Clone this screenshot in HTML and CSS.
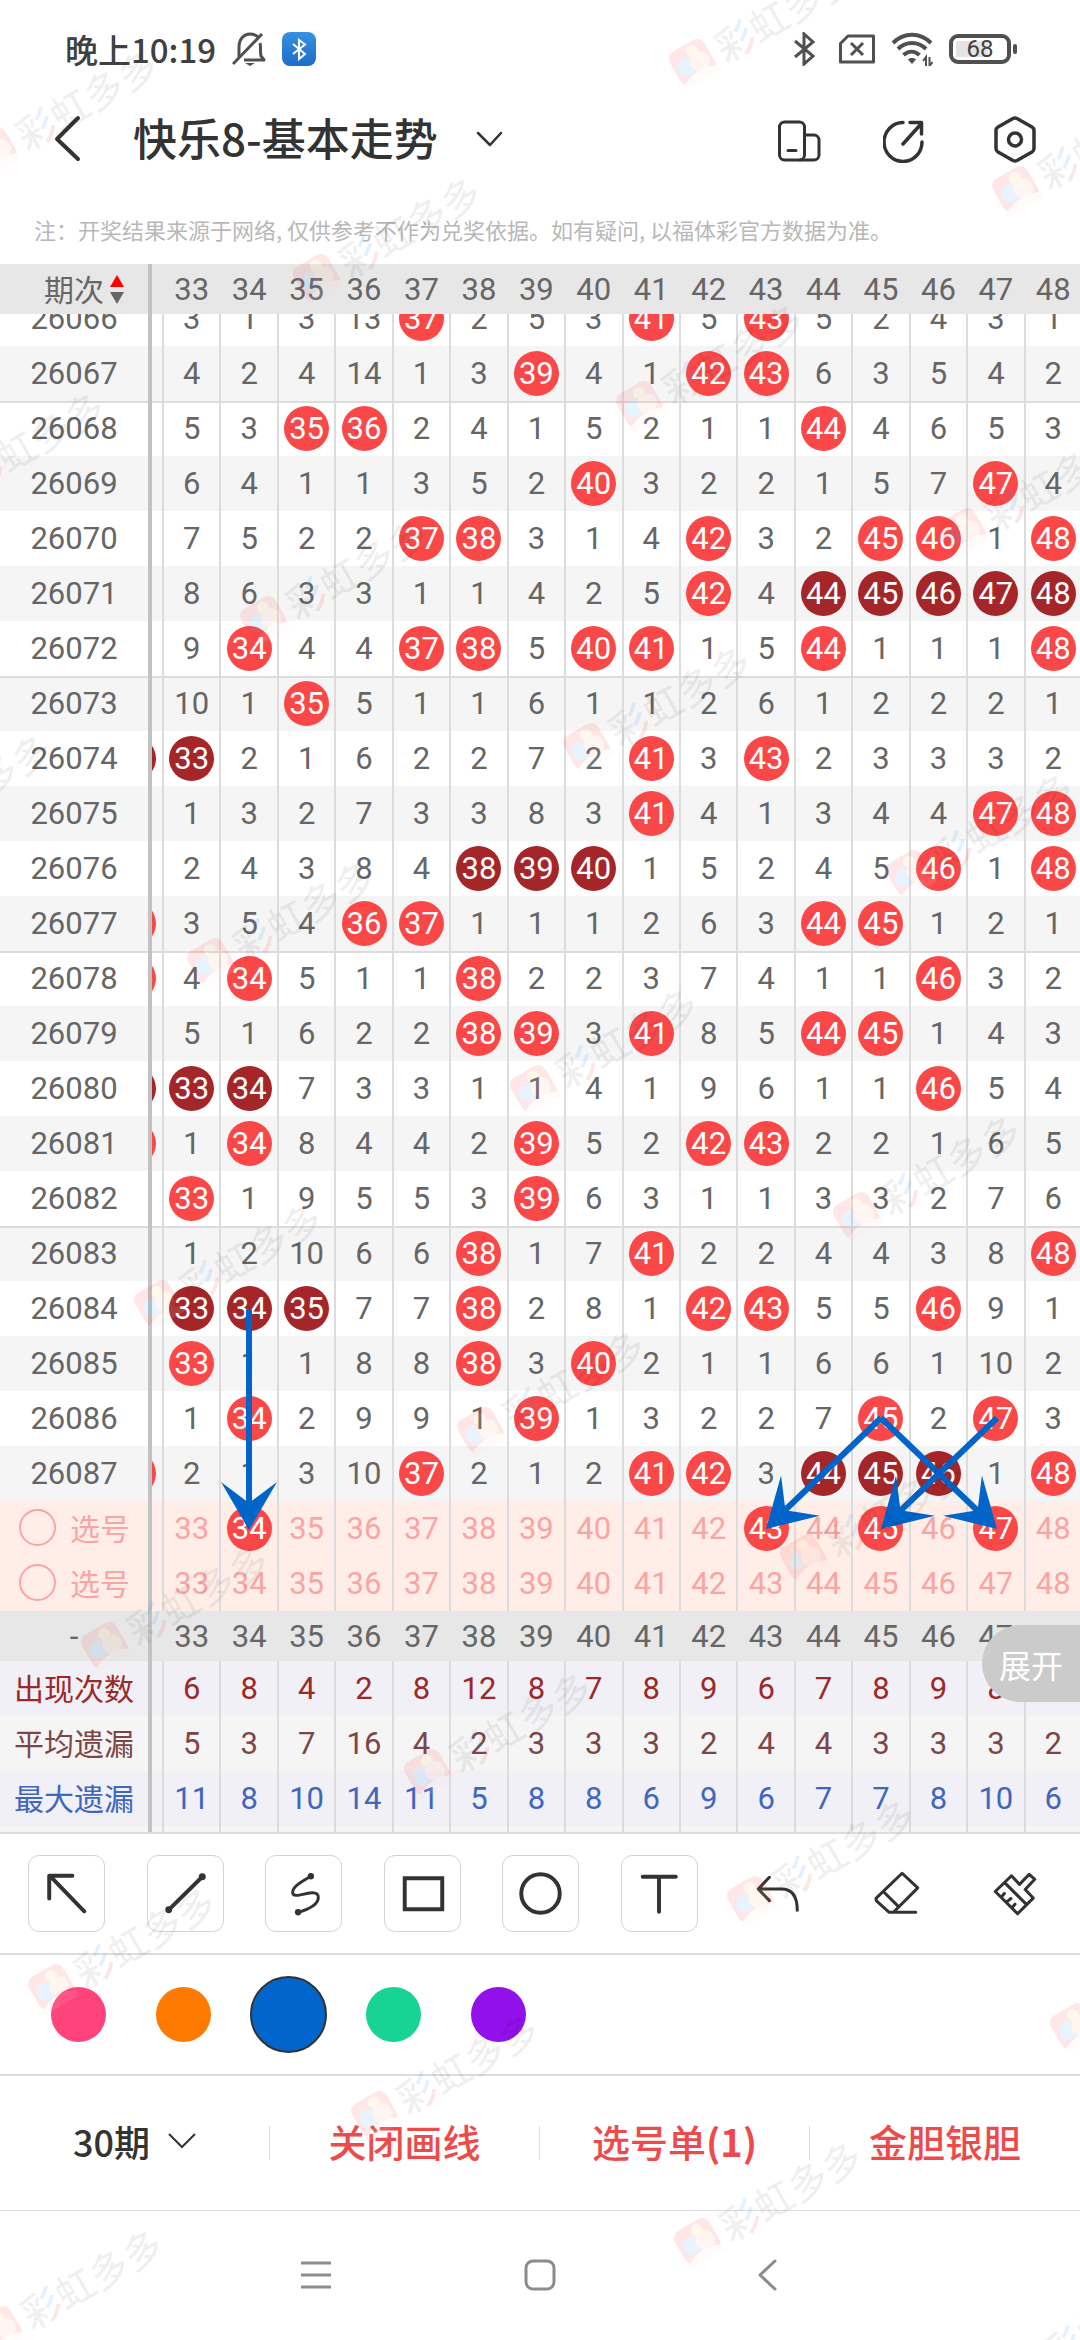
FILE: index.html
```html
<!DOCTYPE html>
<html lang="zh-CN">
<head>
<meta charset="utf-8">
<meta name="viewport" content="width=device-width">
<title>快乐8-基本走势</title>
<link rel="stylesheet" href="styles.css">
</head>
<body>
<div class="screen">
  <div class="status">
    <span class="clock">晚上10:19</span>
    <svg class="ico-bell" width="34" height="34" viewBox="0 0 34 34" fill="none" stroke="#505050" stroke-width="3"><path d="M7 25V15C7 7 12 2 18 2c3 0 6 1 8 3"/><path d="M28 11c1 3 0 9 1 13l3 4H12" stroke-linejoin="round"/><path d="M1 32L30 2"/><path d="M13 31h10l-5 3z" fill="#505050" stroke="none"/></svg>
    <span class="bt-app"><svg width="34" height="34" viewBox="0 0 34 34" fill="none" stroke="#fff" stroke-width="2"><path d="M11 12l12 10-6 5V8l6 4.500L11 22"/></svg></span>
    <div class="status-right">
      <svg width="26" height="34" viewBox="0 0 26 34" fill="none" stroke="#505050" stroke-width="3"><path d="M2 9l18 15-9 8V2l9 8L2 25"/></svg>
      <svg width="40" height="34" viewBox="0 0 40 34" fill="none" stroke="#505050" stroke-width="3" stroke-linejoin="round"><path d="M5.500 11.500L13 4H38.500V30H5.500zM16 11l12 12M28 11L16 23"/></svg>
      <svg width="42" height="34" viewBox="0 0 42 34" fill="none" stroke="#505050" stroke-width="4"><path d="M2 11C13 0 29 0 40 11M7 17c8-8 20-8 28 0M12.500 23c5-4.500 11-4.500 16 0"/><path d="M17 27.500c2-2 6-2 8 0L21 32z" fill="#505050" stroke="none"/><path d="M35 34V25l-3 4M38.500 25v9l3-4" stroke-width="2"/></svg>
      <span class="battery"><span class="battery-body">68</span><span class="battery-nub"></span></span>
    </div>
  </div>

  <header class="topbar">
    <button class="icon-btn" aria-label="返回"><svg width="48" height="48" viewBox="0 0 48 48" fill="none" stroke="#333" stroke-width="4" stroke-linecap="round" stroke-linejoin="round"><path d="M35 3L14 24l21 20"/></svg></button>
    <h1 class="title">快乐8-基本走势</h1>
    <button class="icon-btn" aria-label="切换走势"><svg width="32" height="32" viewBox="0 0 32 32" fill="none" stroke="#333" stroke-width="2.500" stroke-linecap="round" stroke-linejoin="round"><path d="M4 10l12 12 11-12"/></svg></button>
    <div class="actions">
      <button class="icon-btn" aria-label="横屏"><svg width="48" height="48" viewBox="0 0 48 48" fill="none" stroke="#333" stroke-width="3" stroke-linecap="round"><rect x="4.500" y="7" width="25" height="38" rx="5"/><path d="M30 20h9a5 5 0 0 1 5 5v15a5 5 0 0 1-5 5H25M13 35.500h8"/></svg></button>
      <button class="icon-btn" aria-label="分享"><svg width="48" height="48" viewBox="0 0 48 48" fill="none" stroke="#333" stroke-width="3.500" stroke-linecap="round" stroke-linejoin="round"><path d="M20 7.500A19 19.500 0 1 0 39 27M20 29L38 9M27 7.500h11.500V19"/></svg></button>
      <button class="icon-btn" aria-label="设置"><svg width="48" height="48" viewBox="0 0 48 48" fill="none" stroke="#333" stroke-width="3.500" stroke-linejoin="round"><path d="M22 3.500q2-1 4 0l15 8.500q2 1.200 2 3.500v18q0 2.300-2 3.500l-15 8.500q-2 1-4 0L7 37q-2-1.200-2-3.500v-18Q5 13.200 7 12z"/><circle cx="24" cy="24.500" r="6.500"/></svg></button>
    </div>
  </header>
  <p class="notice">注：开奖结果来源于网络, 仅供参考不作为兑奖依据。如有疑问, 以福体彩官方数据为准。</p>

  <main class="chart">
    <table class="trend" id="trend">
      <colgroup><col class="col-period"><col class="col-edge"><col span="16"></colgroup>
    </table>
    <svg class="drawing" viewBox="0 0 1080 1570" preserveAspectRatio="xMinYMin meet" fill="#0064c8" stroke="#0064c8" aria-hidden="true">
      <defs><path id="head" d="M0 0L-48-28-27 0-48 28z" stroke="none"/></defs>
      <g stroke-width="6">
        <path d="M249 1046V1245M881 1154L780 1251M881 1154L982 1251M997 1154L896 1251"/>
      </g>
      <use href="#head" transform="translate(249 1266) rotate(90)"/>
      <use href="#head" transform="translate(766 1265) rotate(136)"/>
      <use href="#head" transform="translate(997 1265) rotate(44)"/>
      <use href="#head" transform="translate(881 1265) rotate(136)"/>
    </svg>
    <button class="expand">展开</button>
  </main>

  <div class="tools" role="toolbar" aria-label="画线工具">
    <button class="tool boxed" aria-label="箭头"><svg viewBox="0 0 76 76"><path d="M56 56L21 20M44 20H20.500V43"/></svg></button>
    <button class="tool boxed" aria-label="直线"><svg viewBox="0 0 76 76"><path d="M21 54.500L55 21"/><circle class="dot" cx="21" cy="54.500" r="3.500"/><circle class="dot" cx="55" cy="21" r="3.500"/></svg></button>
    <button class="tool boxed" aria-label="曲线"><svg viewBox="0 0 76 76"><path class="thin" d="M45.500 20.500C36 26 27 31 27 37C27 46 53 30 53 42C53 49 43 54 32.500 57"/><circle class="dot" cx="45.500" cy="20.500" r="3.200"/><circle class="dot" cx="32.500" cy="57" r="3.200"/></svg></button>
    <button class="tool boxed" aria-label="矩形"><svg viewBox="0 0 76 76"><path class="sharp" d="M20 22.500H58V54H20z"/></svg></button>
    <button class="tool boxed" aria-label="圆形"><svg viewBox="0 0 76 76"><circle cx="38" cy="38" r="19.500"/></svg></button>
    <button class="tool boxed" aria-label="文字"><svg viewBox="0 0 76 76"><path d="M21 21H54.500M37.500 21V56.500"/></svg></button>
    <button class="tool" aria-label="撤销"><svg viewBox="0 0 76 76"><path class="thin" d="M30 22L19 33.500L30 45M19 33.500H42C53 33.500 57.500 42 57.500 54.500"/></svg></button>
    <button class="tool" aria-label="橡皮擦"><svg viewBox="0 0 76 76"><path class="thin" d="M43.500 18L59 32.500L35 56.500H30.500L18.500 45.500Q17 43.500 18.500 42zM25.500 36.500L40 51M34 56.500H57"/></svg></button>
    <button class="tool" aria-label="清空"><svg viewBox="0 0 76 76"><path class="thin" d="M19 36L35 20.500L43 29L52.500 19L58 24L48.500 34L56.500 42.500L41 58zM28.500 27.500L49.500 48.500M25 41.500L28 38M30 46.500L34.500 43M35.500 52L38.500 48.500"/></svg></button>
  </div>

  <div class="palette" role="group" aria-label="画线颜色">
    <input type="radio" name="color" class="swatch pink" aria-label="粉色">
    <input type="radio" name="color" class="swatch orange" aria-label="橙色">
    <input type="radio" name="color" class="swatch blue" aria-label="蓝色" checked>
    <input type="radio" name="color" class="swatch green" aria-label="绿色">
    <input type="radio" name="color" class="swatch purple" aria-label="紫色">
  </div>

  <div class="bottombar">
    <button class="period">30期<svg width="28" height="28" viewBox="0 0 28 28" fill="none" stroke="#333" stroke-width="2"><path d="M1 7l13 13L27 7"/></svg></button>
    <button>关闭画线</button>
    <button>选号单<b>(1)</b></button>
    <button>金胆银胆</button>
  </div>

  <nav class="sysnav">
    <button class="icon-btn" aria-label="最近任务"><svg width="32" height="32" viewBox="0 0 32 32" stroke="#8c8c8c" stroke-width="3"><path d="M1 4h30M1 16h30M1 28h30"/></svg></button>
    <button class="icon-btn" aria-label="主屏幕"><svg width="32" height="32" viewBox="0 0 32 32" fill="none" stroke="#8c8c8c" stroke-width="3"><rect x="2" y="2" width="28" height="28" rx="7"/></svg></button>
    <button class="icon-btn" aria-label="后退"><svg width="32" height="32" viewBox="0 0 32 32" fill="none" stroke="#8c8c8c" stroke-width="3" stroke-linecap="round" stroke-linejoin="round"><path d="M27 2L12 16l15 14"/></svg></button>
  </nav>

  <div class="watermarks" id="watermarks" aria-hidden="true"></div>
</div>
<script src="script.js"></script>
</body>
</html>
```
FILE: styles.css
```css
* { box-sizing: border-box; }
body {
  margin: 0;
  background: #fff;
  color: #333;
  font-family: Roboto, "Noto Sans CJK SC", sans-serif;
}
button {
  margin: 0;
  padding: 0;
  border: 0;
  background: none;
  color: inherit;
  font: inherit;
}
svg { display: block; }
.screen { position: relative; overflow: hidden; min-height: 100vh; }

/* system status bar */
.status {
  display: flex;
  align-items: center;
  height: 98px;
  padding: 0 63px 0 65px;
}
.clock {
  font: 500 33px/48px "Noto Sans CJK SC", sans-serif;
  color: #404040;
}
.ico-bell { margin: 0 16px; }
.bt-app {
  border-radius: 8px;
  background: linear-gradient(#3592e0, #1f6cc9);
}
.status-right { display: flex; align-items: center; gap: 16px; margin-left: auto; }
.battery { display: flex; align-items: center; gap: 2px; }
.battery-body {
  width: 62px;
  height: 30px;
  border: 4px solid #505050;
  border-radius: 9px;
  background: linear-gradient(#e4e4e4, #e4e4e4) 3px 3px / 32px 16px no-repeat;
  color: #404040;
  font-size: 24px;
  line-height: 23px;
  text-align: center;
}
.battery-nub { width: 4px; height: 10px; border-radius: 2px; background: #505050; }

/* page header */
.topbar {
  display: flex;
  align-items: center;
  height: 82px;
  padding: 0 41px 0 43px;
}
.icon-btn { display: block; }
.title {
  margin: 0 36px 0 42px;
  padding-bottom: 4px;
  font: 500 44px/64px "Noto Sans CJK SC", sans-serif;
}
.actions { display: flex; gap: 60px; margin-left: auto; }
.notice {
  margin: 0;
  padding: 17px 34px 3px;
  font: 22px/64px "Noto Sans CJK SC", sans-serif;
  color: #b8b8b8;
  white-space: nowrap;
}

/* trend table */
.chart { position: relative; overflow: hidden; border-bottom: 2px solid #dcdcdc; }
.trend {
  width: calc(100% + 3px);
  table-layout: fixed;
  border-collapse: separate;
  border-spacing: 0;
  font-size: 31px;
  color: #666;
}
.col-period { width: 152px; }
.col-edge { width: 12px; }
.trend th, .trend td {
  padding: 0;
  border-right: 2px solid #dcdcdc;
  font-weight: 400;
}
.trend tr > :first-child { border-right: 4px solid #c2c2c2; }
.cell {
  display: flex;
  flex: none;
  align-items: center;
  justify-content: center;
  width: 100%;
  height: 55px;
  line-height: 45px;
}
.clip { display: flex; align-items: flex-end; height: 32px; overflow: hidden; }
.scale { background: #e7e7e7; }
.scale th { border-right-color: #e7e7e7; }
.scale .cell { height: 50px; }
.shade { background: #f5f5f5; }
.group th, .group td { box-shadow: inset 0 2px #dcdcdc; }
.trend .label {
  padding-bottom: 2px;
  font-family: "Noto Sans CJK SC", sans-serif;
  font-size: 30px;
}
.sort { display: grid; gap: 5px; margin: 2px -20px 0 6px; }
.sort::before, .sort::after {
  content: "";
  border: 7px solid transparent;
  border-width: 0 7px 12px;
  border-bottom-color: #f00;
}
.sort::after { border-width: 12px 7px 0; border-top-color: #666; }
.ball {
  flex: none;
  width: 45px;
  height: 45px;
  border-radius: 50%;
  background: #fa4848;
  color: #fff;
  text-align: center;
}
.ball.run { background: #a52628; }
.edge .cell { justify-content: flex-end; padding-right: 6px; overflow: hidden; }
.pick { background: #ffeee8; color: #fba4a4; }
.pick .cell:has(input) { justify-content: flex-start; padding-left: 19px; gap: 14px; }
.pick input {
  appearance: none;
  width: 37px;
  height: 37px;
  margin: 0;
  border: 2px solid #fba4a4;
  border-radius: 50%;
}
.count { background: #f1f0f6; color: #9c282a; }
.mean { background: #f6f5f6; color: #7d4646; }
.most { background: #f1f0f6; color: #4066bd; }
.rest { background: #f6f5f6; }
.rest .cell { height: 6px; }
.drawing { position: absolute; inset: 0 0 auto; width: 100%; pointer-events: none; }
.expand {
  position: absolute;
  right: 0;
  bottom: 130px;
  width: 98px;
  height: 77px;
  border-radius: 39px 0 0 39px;
  background: #cbcbcb;
  color: #fff;
  font-size: 32px;
}

/* drawing tools */
.tools {
  display: flex;
  justify-content: space-between;
  padding: 21px 27px 21px 28px;
  border-bottom: 2px solid #dcdcdc;
}
.tool { width: 77px; height: 77px; }
.boxed { border: 1px solid #d4d4d4; border-radius: 11px; }
.tool svg {
  width: 100%;
  fill: none;
  stroke: #333;
  stroke-width: 4;
  stroke-linecap: round;
  stroke-linejoin: round;
}
.tool .thin { stroke-width: 3; }
.tool .sharp { stroke-linejoin: miter; }
.tool .dot { fill: #333; stroke: none; }
.palette {
  display: flex;
  align-items: center;
  gap: 50px;
  height: 121px;
  padding-left: 51px;
  border-bottom: 2px solid #dcdcdc;
}
.swatch {
  appearance: none;
  width: 55px;
  height: 55px;
  margin: 0;
  border-radius: 50%;
}
.swatch:checked { width: 77px; height: 77px; margin: 0 -11px; border: 2px solid #333; }
.pink { background: #ff447c; }
.orange { background: #ff7a00; }
.blue { background: #0066cc; }
.green { background: #18d494; }
.purple { background: #9210ea; }

.bottombar {
  display: grid;
  grid-template-columns: repeat(4, 1fr);
  align-items: center;
  height: 135px;
  border-bottom: 1px solid #dcdcdc;
}
.bottombar button {
  height: 34px;
  padding-bottom: 4px;
  border-right: 1px solid #dcdcdc;
  color: #ed4b4b;
  font: 500 38px/30px "Noto Sans CJK SC", sans-serif;
}
.bottombar button:last-child { border-right: 0; }
.bottombar b { font-weight: 700; }
.bottombar .period {
  display: flex;
  align-items: center;
  justify-content: center;
  gap: 18px;
  color: #333;
  font-size: 36px;
}
.sysnav {
  display: flex;
  align-items: center;
  justify-content: center;
  gap: 192px;
  height: 128px;
}

/* brand watermark laid over the whole page */
.watermarks { position: absolute; inset: 0; overflow: hidden; pointer-events: none; }
.mark {
  position: absolute;
  display: flex;
  align-items: center;
  gap: 8px;
  height: 42px;
  margin: -21px 0 0 -20px;
  transform: rotate(-30deg);
  transform-origin: 20px 21px;
  color: rgba(0, 0, 0, 0.06);
  font: 500 39px/42px "Noto Sans CJK SC", sans-serif;
  white-space: nowrap;
}
.mark svg { opacity: 0.11; }
.mark i {
  font-style: normal;
  color: transparent;
  background:
    linear-gradient(rgba(30, 140, 255, 0.12) 62%, rgba(255, 50, 50, 0.12) 62%) 24px 0 / 15px 100% no-repeat,
    linear-gradient(rgba(0, 0, 0, 0.06), rgba(0, 0, 0, 0.06)) 0 0 / 24px 100% no-repeat;
  -webkit-background-clip: text;
  background-clip: text;
}
```
FILE: script.js
```js
// Draws: a number is the current miss count, "*" a hit, "#" a hit inside a run.
// The first mark of each row belongs to column 32, mostly scrolled out of view.
const draws = [
  ["26066", "- 3 1 3 13 * 2 5 3 * 5 * 5 2 4 3 1"],
  ["26067", "- 4 2 4 14 1 3 * 4 1 * * 6 3 5 4 2"],
  ["26068", "- 5 3 * * 2 4 1 5 2 1 1 * 4 6 5 3"],
  ["26069", "- 6 4 1 1 3 5 2 * 3 2 2 1 5 7 * 4"],
  ["26070", "- 7 5 2 2 * * 3 1 4 * 3 2 * * 1 *"],
  ["26071", "- 8 6 3 3 1 1 4 2 5 * 4 # # # # #"],
  ["26072", "- 9 * 4 4 * * 5 * * 1 5 * 1 1 1 *"],
  ["26073", "- 10 1 * 5 1 1 6 1 1 2 6 1 2 2 2 1"],
  ["26074", "# # 2 1 6 2 2 7 2 * 3 * 2 3 3 3 2"],
  ["26075", "- 1 3 2 7 3 3 8 3 * 4 1 3 4 4 * *"],
  ["26076", "- 2 4 3 8 4 # # # 1 5 2 4 5 * 1 *"],
  ["26077", "* 3 5 4 * * 1 1 1 2 6 3 * * 1 2 1"],
  ["26078", "* 4 * 5 1 1 * 2 2 3 7 4 1 1 * 3 2"],
  ["26079", "- 5 1 6 2 2 * * 3 * 8 5 * * 1 4 3"],
  ["26080", "# # # 7 3 3 1 1 4 1 9 6 1 1 * 5 4"],
  ["26081", "* 1 * 8 4 4 2 * 5 2 * * 2 2 1 6 5"],
  ["26082", "- * 1 9 5 5 3 * 6 3 1 1 3 3 2 7 6"],
  ["26083", "- 1 2 10 6 6 * 1 7 * 2 2 4 4 3 8 *"],
  ["26084", "- # # # 7 7 * 2 8 1 * * 5 5 * 9 1"],
  ["26085", "- * 1 1 8 8 * 3 * 2 1 1 6 6 1 10 2"],
  ["26086", "- 1 * 2 9 9 1 * 1 3 2 2 7 * 2 * 3"],
  ["26087", "* 2 1 3 10 * 2 1 2 * * 3 # # # 1 *"],
];
const stats = [
  ["count", "出现次数", "6 8 4 2 8 12 8 7 8 9 6 7 8 9 8 8"],
  ["mean", "平均遗漏", "5 3 7 16 4 2 3 3 3 2 4 4 3 3 3 2"],
  ["most", "最大遗漏", "11 8 10 14 11 5 8 8 6 9 6 7 7 8 10 6"],
];
const numbers = Array.from({ length: 16 }, (_, i) => 33 + i);

const cell = (html, extra = "") => `<div class="cell ${extra}">${html}</div>`;
const ball = (n, run) => `<span class="ball${run ? " run" : ""}">${n}</span>`;
const mark = (m, n) => (m === "*" ? ball(n) : m === "#" ? ball(n, true) : m === "-" ? "" : m);

function row(cls, head, edge, cells, tag = "td") {
  return `<tr class="${cls}"><th scope="row">${head}</th><${tag} class="edge">${edge}</${tag}>` +
    cells.map(c => `<${tag}>${c}</${tag}>`).join("") + "</tr>";
}

const body = draws.map(([id, marks], r) => {
  const wrap = r === 0 ? h => `<div class="clip">${cell(h)}</div>` : h => cell(h);
  const [edge, ...rest] = marks.split(" ");
  const cls = (r % 2 ? "shade" : "") + (r % 5 === 2 ? " group" : "");
  return row(cls, wrap(id), wrap(mark(edge, "")), rest.map((m, i) => wrap(mark(m, numbers[i]))));
}).join("");

const picks = [[34, 43, 45, 47], []].map((chosen, i) =>
  row("pick",
    cell(`<input type="checkbox" id="pick${i}"><label for="pick${i}">选号</label>`, "label"),
    cell(""),
    numbers.map(n => cell(chosen.includes(n) ? ball(n) : n)))
).join("");

const scale = head => row("scale", head, cell(""), numbers.map(n => cell(n)), "th");

document.getElementById("trend").insertAdjacentHTML("beforeend",
  "<thead>" + scale(cell('期次<span class="sort"></span>', "label")) + "</thead><tbody>" +
  body + picks + "</tbody><tfoot>" + scale(cell("-")) +
  stats.map(([cls, name, v]) => row(cls, cell(name, "label"), cell(""), v.split(" ").map(x => cell(x)))).join("") +
  row("rest", cell(""), cell(""), numbers.map(() => cell(""))) + "</tfoot>");

// Watermarks repeat on a slanted grid across the page.
const logo = '<svg width="40" height="40" viewBox="0 0 40 40"><rect width="40" height="38" rx="9" fill="#f33"/>' +
  '<circle cx="25" cy="9" r="6" fill="#fc6"/><circle cx="13" cy="20" r="9" fill="#39f"/>' +
  '<circle cx="27" cy="22" r="10" fill="#fa8"/><path d="M0 36Q20 24 40 34V40H0z" fill="#fdd"/></svg>';
let marks = "";
for (let j = -1; j < 8; j++) {
  for (let i = -3; i < 4; i++) {
    const x = 693 + 323 * i - 53 * j;
    const y = 63 + 127 * i + 342 * j;
    if (x > -160 && x < 1100 && y > -30 && y < 2440) {
      marks += `<div class="mark" style="left:${x}px;top:${y}px">${logo}<span><i>彩</i>虹多多</span></div>`;
    }
  }
}
document.getElementById("watermarks").innerHTML = marks;
```
